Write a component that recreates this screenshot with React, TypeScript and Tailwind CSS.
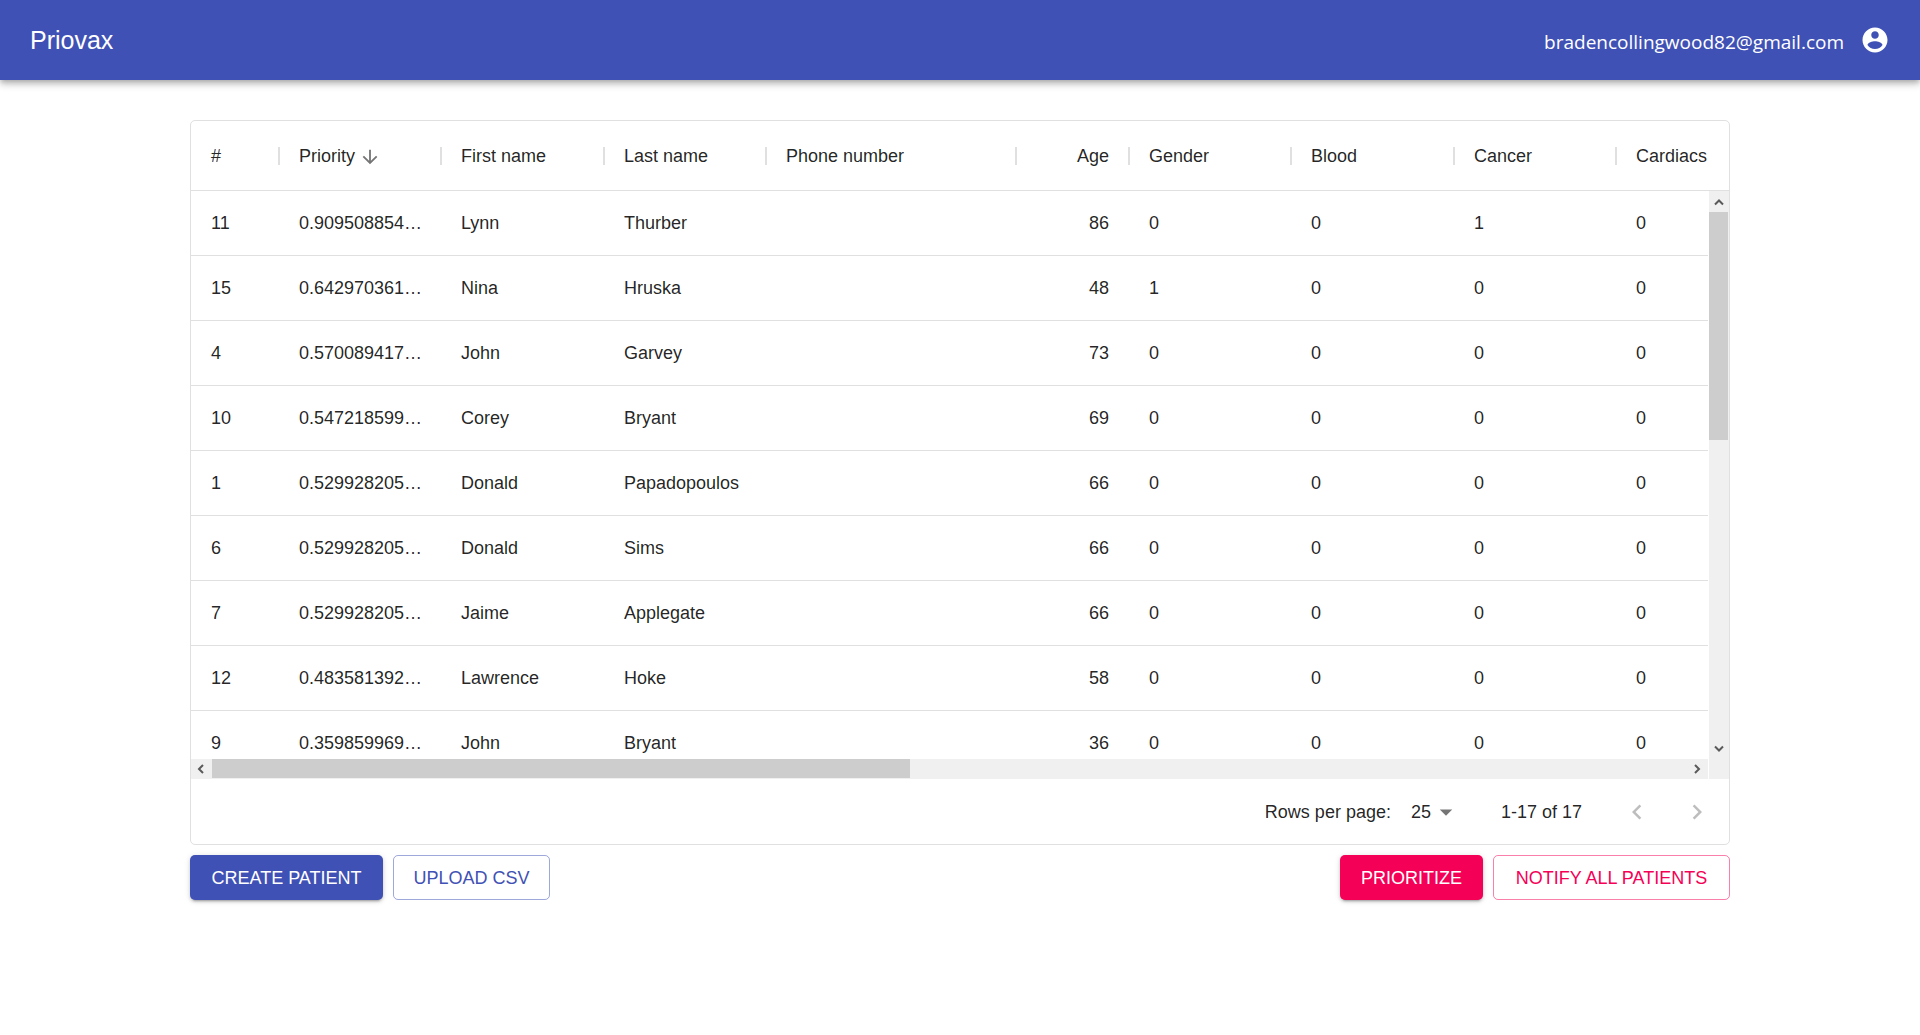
import type { ButtonHTMLAttributes, ReactNode } from "react";
import clsx from "clsx";

type Patient = {
  id: number;
  priority: string;
  firstName: string;
  lastName: string;
  phone: string;
  age: number;
  gender: number;
  blood: number;
  cancer: number;
  cardiacs: number;
};

type Column = {
  field: keyof Patient;
  label: string;
  width?: string;
  align?: "right";
  sorted?: boolean;
};

const columns: Column[] = [
  { field: "id", label: "#", width: "w-[88px]" },
  { field: "priority", label: "Priority", width: "w-[162px]", sorted: true },
  { field: "firstName", label: "First name", width: "w-[163px]" },
  { field: "lastName", label: "Last name", width: "w-[162px]" },
  { field: "phone", label: "Phone number", width: "w-[250px]" },
  { field: "age", label: "Age", width: "w-[113px]", align: "right" },
  { field: "gender", label: "Gender", width: "w-[162px]" },
  { field: "blood", label: "Blood", width: "w-[163px]" },
  { field: "cancer", label: "Cancer", width: "w-[162px]" },
  { field: "cardiacs", label: "Cardiacs" },
];

const patients: Patient[] = [
  { id: 11, priority: "0.909508854166", firstName: "Lynn", lastName: "Thurber", phone: "", age: 86, gender: 0, blood: 0, cancer: 1, cardiacs: 0 },
  { id: 15, priority: "0.642970361328", firstName: "Nina", lastName: "Hruska", phone: "", age: 48, gender: 1, blood: 0, cancer: 0, cardiacs: 0 },
  { id: 4, priority: "0.570089417317", firstName: "John", lastName: "Garvey", phone: "", age: 73, gender: 0, blood: 0, cancer: 0, cardiacs: 0 },
  { id: 10, priority: "0.547218599609", firstName: "Corey", lastName: "Bryant", phone: "", age: 69, gender: 0, blood: 0, cancer: 0, cardiacs: 0 },
  { id: 1, priority: "0.529928205128", firstName: "Donald", lastName: "Papadopoulos", phone: "", age: 66, gender: 0, blood: 0, cancer: 0, cardiacs: 0 },
  { id: 6, priority: "0.529928205128", firstName: "Donald", lastName: "Sims", phone: "", age: 66, gender: 0, blood: 0, cancer: 0, cardiacs: 0 },
  { id: 7, priority: "0.529928205128", firstName: "Jaime", lastName: "Applegate", phone: "", age: 66, gender: 0, blood: 0, cancer: 0, cardiacs: 0 },
  { id: 12, priority: "0.483581392578", firstName: "Lawrence", lastName: "Hoke", phone: "", age: 58, gender: 0, blood: 0, cancer: 0, cardiacs: 0 },
  { id: 9, priority: "0.359859969401", firstName: "John", lastName: "Bryant", phone: "", age: 36, gender: 0, blood: 0, cancer: 0, cardiacs: 0 },
];

function Icon({ d, className }: { d: string; className?: string }) {
  return (
    <svg viewBox="0 0 24 24" fill="currentColor" aria-hidden className={clsx("shrink-0", className)}>
      <path d={d} />
    </svg>
  );
}

function ScrollArrow({ points }: { points: string }) {
  return (
    <svg viewBox="0 0 10 10" fill="none" stroke="#5a5a5a" strokeWidth="2" aria-hidden className="size-[10px]">
      <polyline points={points} />
    </svg>
  );
}

function AppHeader() {
  return (
    <header className="relative flex h-20 items-center justify-between bg-[#3f51b5] px-[30px] text-white shadow-[0_2px_5px_-1px_rgba(0,0,0,0.2),0_5px_6px_0_rgba(0,0,0,0.14),0_1px_12px_0_rgba(0,0,0,0.12)]">
      <h1 className="text-[25px]">Priovax</h1>
      <div className="flex items-center gap-4">
        <span className="pt-1 font-['Open_Sans',sans-serif] text-[19px]">
          bradencollingwood82@gmail.com
        </span>
        <button type="button" aria-label="Account">
          <Icon
            className="size-[30px]"
            d="M12 2C6.48 2 2 6.48 2 12s4.48 10 10 10 10-4.48 10-10S17.52 2 12 2zm0 3c1.66 0 3 1.34 3 3s-1.34 3-3 3-3-1.34-3-3 1.34-3 3-3zm0 14.2c-2.5 0-4.71-1.28-6-3.22.03-1.99 4-3.08 6-3.08 1.99 0 5.97 1.09 6 3.08-1.29 1.94-3.5 3.22-6 3.22z"
          />
        </button>
      </div>
    </header>
  );
}

function ColumnWidths() {
  return (
    <colgroup>
      {columns.map((column) => (
        <col key={column.field} className={column.width} />
      ))}
    </colgroup>
  );
}

function GridHeader() {
  return (
    <div className="border-b border-[#e0e0e0]">
      <table className="w-full table-fixed">
        <ColumnWidths />
        <thead>
          <tr className="h-[69px]">
            {columns.map((column, index) => (
              <th
                key={column.field}
                scope="col"
                aria-sort={column.sorted ? "descending" : undefined}
                className="p-0 font-normal"
              >
                <div className="-ml-px flex items-center">
                  <span className={clsx("h-[18px] w-[2px] shrink-0", index > 0 && "bg-[#e0e0e0]")} />
                  <div
                    className={clsx(
                      "flex min-w-0 flex-1 items-center gap-1 whitespace-nowrap pl-[19px]",
                      column.align === "right" && "justify-end pr-5"
                    )}
                  >
                    {column.label}
                    {column.sorted && (
                      <Icon
                        className="mt-[2px] size-[22px] text-black/54"
                        d="M20 12l-1.41-1.41L13 16.17V4h-2v12.17l-5.58-5.59L4 12l8 8 8-8z"
                      />
                    )}
                  </div>
                </div>
              </th>
            ))}
          </tr>
        </thead>
      </table>
    </div>
  );
}

function GridBody() {
  return (
    <table className="w-full table-fixed border-separate border-spacing-0">
      <ColumnWidths />
      <tbody>
        {patients.map((patient) => (
          <tr key={patient.id} className="h-[65px]">
            {columns.map((column) => (
              <td
                key={column.field}
                className={clsx(
                  "truncate border-b border-[#e0e0e0] py-0 pl-5",
                  column.align === "right" ? "pr-5 text-right" : "pr-[18px]"
                )}
              >
                {patient[column.field]}
              </td>
            ))}
          </tr>
        ))}
      </tbody>
    </table>
  );
}

function VerticalScrollbar() {
  return (
    <div aria-hidden className="flex flex-col items-center bg-[#f0f0f0] pr-px">
      <div className="flex h-[21px] items-center">
        <ScrollArrow points="1,7.5 5,3.5 9,7.5" />
      </div>
      <div className="h-[228px] w-full bg-[#cdcdcd]" />
      <div className="mb-5 mt-auto flex h-[21px] items-center">
        <ScrollArrow points="1,2.5 5,6.5 9,2.5" />
      </div>
    </div>
  );
}

function HorizontalScrollbar() {
  return (
    <div aria-hidden className="flex h-5 items-center bg-[#f0f0f0] pb-px">
      <div className="flex w-[21px] justify-center pr-[2px]">
        <ScrollArrow points="7,1 3,5 7,9" />
      </div>
      <div className="h-full w-[46%] bg-[#cdcdcd]" />
      <div className="ml-auto flex w-[23px] justify-center">
        <ScrollArrow points="3,1 7,5 3,9" />
      </div>
    </div>
  );
}

function Pagination() {
  return (
    <div className="flex h-[65px] items-center justify-end pr-[2px]">
      <label htmlFor="rows-per-page">Rows per page:</label>
      <div className="relative ml-5 mr-10 flex items-center">
        <select
          id="rows-per-page"
          defaultValue="25"
          className="w-[50px] appearance-none bg-transparent"
        >
          <option>25</option>
          <option>50</option>
          <option>100</option>
        </select>
        <Icon
          className="pointer-events-none absolute right-0 size-[30px] text-black/54"
          d="M7 10l5 5 5-5z"
        />
      </div>
      <span className="mr-[25px]">1-17 of 17</span>
      <button type="button" disabled aria-label="Previous page" className="px-[15px] text-black/26">
        <Icon className="size-[30px]" d="M15.41 16.59L10.83 12l4.58-4.59L14 6l-6 6 6 6z" />
      </button>
      <button type="button" disabled aria-label="Next page" className="px-[15px] text-black/26">
        <Icon className="size-[30px]" d="M8.59 16.59L13.17 12 8.59 7.41 10 6l6 6-6 6z" />
      </button>
    </div>
  );
}

const buttonStyles = {
  primary:
    "bg-[#3f51b5] text-white shadow-[0_4px_2px_-3px_rgba(0,0,0,0.2),0_2px_3px_0_rgba(0,0,0,0.14),0_1px_6px_0_rgba(0,0,0,0.12)]",
  primaryOutlined: "border border-[#3f51b5]/50 text-[#3f51b5]",
  secondary:
    "bg-[#f50057] text-white shadow-[0_4px_2px_-3px_rgba(0,0,0,0.2),0_2px_3px_0_rgba(0,0,0,0.14),0_1px_6px_0_rgba(0,0,0,0.12)]",
  secondaryOutlined: "border border-[#f50057]/50 text-[#f50057]",
};

type ActionButtonProps = ButtonHTMLAttributes<HTMLButtonElement> & {
  look: keyof typeof buttonStyles;
  children: ReactNode;
};

function ActionButton({ look, className, children, ...props }: ActionButtonProps) {
  return (
    <button
      type="button"
      className={clsx(
        "h-[45px] whitespace-nowrap rounded-[5px] text-center uppercase",
        buttonStyles[look],
        className
      )}
      {...props}
    >
      {children}
    </button>
  );
}

export default function App() {
  return (
    <div className="min-h-screen bg-white font-['Liberation_Sans',Arial,sans-serif] text-lg/[26px] text-black/87">
      <AppHeader />
      <main className="mx-auto mt-10 w-full max-w-[1540px]">
        <section aria-label="Patients" className="overflow-hidden rounded-[5px] border border-[#e0e0e0]">
          <GridHeader />
          <div className="grid grid-cols-[minmax(0,1fr)_20px] gap-px">
            <div>
              <div className="h-[568px] overflow-hidden">
                <GridBody />
              </div>
              <HorizontalScrollbar />
            </div>
            <VerticalScrollbar />
          </div>
          <Pagination />
        </section>
        <div className="mt-[10px] flex justify-between">
          <div className="flex gap-[10px]">
            <ActionButton look="primary" className="w-[193px]">Create patient</ActionButton>
            <ActionButton look="primaryOutlined" className="w-[157px]">Upload CSV</ActionButton>
          </div>
          <div className="flex gap-[10px]">
            <ActionButton look="secondary" className="w-[143px]">Prioritize</ActionButton>
            <ActionButton look="secondaryOutlined" className="w-[237px]">Notify all patients</ActionButton>
          </div>
        </div>
      </main>
    </div>
  );
}
